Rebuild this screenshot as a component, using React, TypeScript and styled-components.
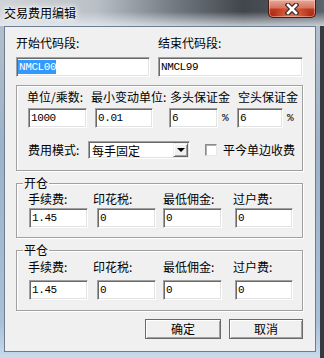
import React from "react";
import styled, { createGlobalStyle } from "styled-components";

const GlobalStyle = createGlobalStyle`
  html, body { margin: 0; padding: 0; background: #2f343b; }
  body { font-family: "Noto Sans CJK SC", "Noto Sans", sans-serif; }
  * { box-sizing: border-box; }
`;

const Window = styled.div`
  width: 324px;
  height: 358px;
  display: flex;
  flex-direction: column;
  background:
    linear-gradient(90deg, transparent 320px, #353a41 320px),
    linear-gradient(180deg, #b8c2cc 0%, #9db2c8 40%, #a8c0d9 90%, #c9dbeb 100%),
    linear-gradient(90deg, #7d98b8 0px, #a9c1da 4px);
  overflow: hidden;
`;

const TitleBar = styled.div`
  height: 26px;
  flex: none;
  display: flex;
  justify-content: space-between;
  align-items: flex-start;
  padding: 0 8px 0 4px;
  background:
    linear-gradient(180deg, rgba(255, 255, 255, 0) 45%, rgba(235, 240, 245, 0.75) 100%),
    linear-gradient(90deg, #d0d4d8 0%, #b9bfc6 30%, #6f767e 55%, #41464c 75%, #5c636b 100%);
`;

const Title = styled.div`
  padding-top: 5px;
  font-size: 12px;
  line-height: 16px;
  color: #000;
  text-shadow: 0 0 3px #fff, 0 0 6px #fff, 0 0 8px #fff;
`;

const Close = styled.div`
  width: 48px;
  height: 18px;
  display: flex;
  align-items: center;
  justify-content: center;
  border: 1px solid #4a1a12;
  border-top: none;
  border-radius: 0 0 5px 5px;
  background:
    radial-gradient(ellipse at 50% 110%, rgba(255, 150, 110, 0.8) 0%, rgba(255, 150, 110, 0) 60%),
    linear-gradient(180deg, #e9a99a 0%, #d47560 45%, #c0391f 55%, #a8260f 100%);
  box-shadow: inset 0 0 0 1px rgba(255, 220, 210, 0.45);
`;

const Client = styled.div`
  flex: 1;
  margin: 0 8px 6px 4px;
  border: 1px solid #6c7d90;
  background: #f0f0f0;
  padding: 8px 12px 0 11px;
  display: flex;
  flex-direction: column;
  font-size: 12px;
  color: #000;
`;

const TopGrid = styled.div`
  display: grid;
  grid-template-columns: 134px 145px;
  column-gap: 8px;
  row-gap: 6px;
`;

const Label = styled.span<{ $w?: number }>`
  display: inline-block;
  flex: none;
  width: ${(p) => (p.$w ? `${p.$w}px` : "auto")};
  line-height: 16px;
  white-space: nowrap;
  font-size: 12px;
`;

const Input = styled.div<{ $w?: number; $lift?: boolean }>`
  flex: none;
  width: ${(p) => (p.$w ? `${p.$w}px` : "100%")};
  height: 20px;
  margin-top: ${(p) => (p.$lift ? "-1px" : "0")};
  background: #fff;
  border: 1px solid;
  border-color: #a0a0a0 #ffffff #ffffff #a0a0a0;
  box-shadow: inset 1px 1px 0 #696969, inset -1px -1px 0 #e3e3e3;
  padding-left: 2px;
  font-family: "Liberation Mono", monospace;
  font-size: 11px;
  letter-spacing: -0.4px;
  line-height: 18px;
  white-space: pre;
  color: #000;
`;

const Selected = styled.span`
  display: inline-block;
  background: #3399ff;
  color: #fff;
  line-height: 14px;
  margin-left: -1px;
  padding-left: 1px;
  margin-top: 2px;
  vertical-align: top;
`;

const Group = styled.div<{ $h: number; $mt: number; $pt: number }>`
  position: relative;
  height: ${(p) => p.$h}px;
  margin-top: ${(p) => p.$mt}px;
  padding-top: ${(p) => p.$pt}px;
  border: 1px solid #a0a0a0;
  box-shadow: inset 1px 1px 0 #fff, 1px 1px 0 #fff;
  display: flex;
  flex-direction: column;
`;

const GroupTitle = styled.span`
  position: absolute;
  top: -9px;
  left: 6px;
  padding: 0 1px;
  background: #f0f0f0;
  line-height: 16px;
  font-size: 12px;
`;

const Row = styled.div<{ $pl: number; $mt?: number; $h?: number }>`
  display: flex;
  align-items: center;
  padding-left: ${(p) => p.$pl}px;
  margin-top: ${(p) => p.$mt ?? 0}px;
  height: ${(p) => (p.$h ? `${p.$h}px` : "auto")};
`;

const Gap = styled.span<{ $w: number }>`
  flex: none;
  width: ${(p) => p.$w}px;
`;

const Pct = styled.span`
  flex: none;
  width: 8px;
  font-family: "Liberation Mono", monospace;
  font-size: 11px;
  line-height: 14px;
`;

const Select = styled.div`
  flex: none;
  width: 102px;
  height: 18px;
  display: flex;
  align-items: stretch;
  background: #fff;
  border: 1px solid;
  border-color: #a0a0a0 #ffffff #ffffff #a0a0a0;
  box-shadow: inset 1px 1px 0 #696969, inset -1px -1px 0 #e3e3e3;
  padding: 1px;
`;

const SelectText = styled.span`
  flex: 1;
  padding-left: 2px;
  font-size: 12px;
  line-height: 15px;
`;

const SelectButton = styled.span`
  flex: none;
  width: 15px;
  display: flex;
  align-items: center;
  justify-content: center;
  background: #f0f0f0;
  border: 1px solid;
  border-color: #f0f0f0 #696969 #696969 #f0f0f0;
  box-shadow: inset 1px 1px 0 #fff, inset -1px -1px 0 #a0a0a0;
`;

const Arrow = styled.span`
  width: 0;
  height: 0;
  border-left: 4px solid transparent;
  border-right: 4px solid transparent;
  border-top: 4px solid #000;
`;

const Check = styled.span`
  flex: none;
  width: 12px;
  height: 12px;
  background: #fff;
  border: 1px solid;
  border-color: #8a8a8a #e8e8e8 #e8e8e8 #8a8a8a;
  box-shadow: inset 1px 1px 0 #b0b0b0;
`;

const Buttons = styled.div`
  display: flex;
  justify-content: flex-end;
  gap: 8px;
  margin-top: 8px;
`;

const Button = styled.div<{ $w: number }>`
  width: ${(p) => p.$w}px;
  height: 20px;
  display: flex;
  align-items: center;
  justify-content: center;
  background: #f0f0f0;
  border: 1px solid #6a6a6a;
  box-shadow: inset 1px 1px 0 #fff, inset -1px -1px 0 #a0a0a0;
  font-size: 12px;
  line-height: 16px;
`;

const FeeGroup: React.FC<{ title: string; h: number; mt: number; pt: number; gap: number; lift?: boolean }> = ({
  title,
  h,
  mt,
  pt,
  gap,
  lift,
}) => (
  <Group $h={h} $mt={mt} $pt={pt}>
    <GroupTitle>{title}</GroupTitle>
    <Row $pl={11}>
      <Label $w={65}>手续费:</Label>
      <Label $w={70}>印花税:</Label>
      <Label $w={70}>最低佣金:</Label>
      <Label>过户费:</Label>
    </Row>
    <Row $pl={12} $mt={gap}>
      <Input $w={59}>1.45</Input>
      <Gap $w={9} />
      <Input $w={59}>0</Input>
      <Gap $w={7} />
      <Input $w={59} $lift={lift}>0</Input>
      <Gap $w={13} />
      <Input $w={58}>0</Input>
    </Row>
  </Group>
);

export default function App() {
  return (
    <>
      <GlobalStyle />
      <Window>
        <TitleBar>
          <Title>交易费用编辑</Title>
          <Close>
            <svg width="14" height="12" viewBox="0 0 14 12">
              <path d="M3 2 L11 10 M11 2 L3 10" stroke="#3a2a28" strokeWidth="5" strokeLinecap="square" />
              <path d="M3 2 L11 10 M11 2 L3 10" stroke="#ffffff" strokeWidth="2.6" strokeLinecap="square" />
            </svg>
          </Close>
        </TitleBar>
        <Client>
          <TopGrid>
            <Label>开始代码段:</Label>
            <Label>结束代码段:</Label>
            <Input>
              <Selected>NMCL00</Selected>
            </Input>
            <Input>NMCL99</Input>
          </TopGrid>

          <Group $h={86} $mt={8} $pt={3}>
            <Row $pl={10}>
              <Label $w={64}>单位/乘数:</Label>
              <Label $w={79}>最小变动单位:</Label>
              <Label $w={68}>多头保证金</Label>
              <Label>空头保证金</Label>
            </Row>
            <Row $pl={11} $mt={3}>
              <Input $w={59}>1000</Input>
              <Gap $w={8} />
              <Input $w={58}>0.01</Input>
              <Gap $w={16} />
              <Input $w={49}>6</Input>
              <Gap $w={4} />
              <Pct>%</Pct>
              <Gap $w={7} />
              <Input $w={46}>6</Input>
              <Gap $w={4} />
              <Pct>%</Pct>
            </Row>
            <Row $pl={11} $mt={13} $h={18}>
              <Label $w={60}>费用模式:</Label>
              <Select>
                <SelectText>每手固定</SelectText>
                <SelectButton>
                  <Arrow />
                </SelectButton>
              </Select>
              <Gap $w={15} />
              <Check />
              <Gap $w={6} />
              <Label>平今单边收费</Label>
            </Row>
          </Group>

          <FeeGroup title="开仓" h={55} mt={12} pt={7} gap={1} />
          <FeeGroup title="平仓" h={61} mt={12} pt={8} gap={5} lift />

          <Buttons>
            <Button $w={76}>确定</Button>
            <Button $w={74}>取消</Button>
          </Buttons>
        </Client>
      </Window>
    </>
  );
}
